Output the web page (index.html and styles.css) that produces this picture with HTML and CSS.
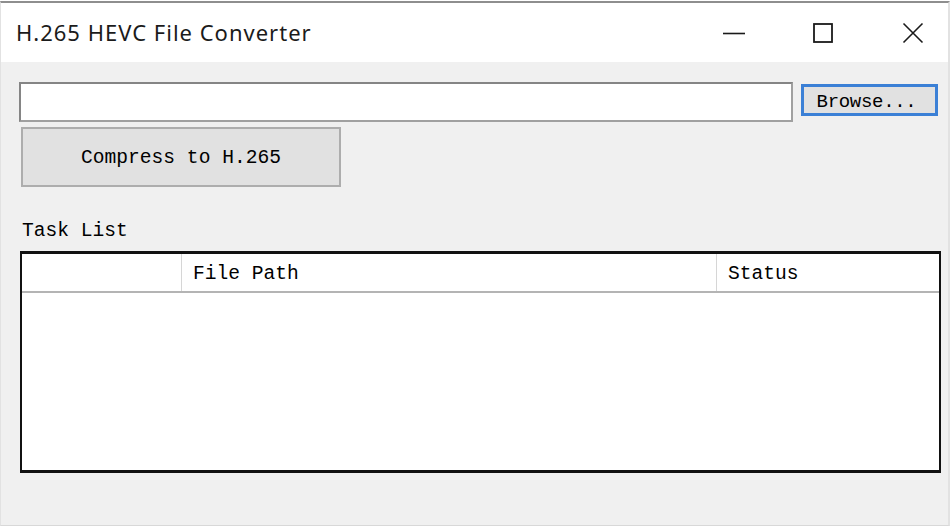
FILE: index.html
```html
<!DOCTYPE html>
<html>
<head>
<meta charset="utf-8">
<title>H.265 HEVC File Converter</title>
<link rel="stylesheet" href="styles.css">
</head>
<body>
<div class="window">
  <div class="titlebar">
    <div class="title">H.265 HEVC File Converter</div>
    <div class="controls">
      <div class="ctrl">
        <svg width="24" height="24" viewBox="0 0 24 24"><path d="M1 12.5H23" stroke="#1a1a1a" stroke-width="1.6" fill="none"/></svg>
      </div>
      <div class="ctrl">
        <svg width="24" height="24" viewBox="0 0 24 24"><rect x="3" y="3" width="18" height="18" stroke="#1a1a1a" stroke-width="1.8" fill="none"/></svg>
      </div>
      <div class="ctrl">
        <svg width="24" height="24" viewBox="0 0 24 24"><path d="M2.5 2.5L21.5 21.5M21.5 2.5L2.5 21.5" stroke="#1a1a1a" stroke-width="1.6" fill="none"/></svg>
      </div>
    </div>
  </div>
  <div class="content">
    <div class="row">
      <div class="path-input"></div>
      <div class="btn browse">Browse...</div>
    </div>
    <div class="btn compress">Compress to H.265</div>
    <div class="label">Task List</div>
    <div class="table">
      <div class="thead">
        <div class="th c1"></div>
        <div class="th c2">File Path</div>
        <div class="th c3">Status</div>
      </div>
      <div class="tbody"></div>
    </div>
  </div>
</div>
</body>
</html>
```

FILE: styles.css
```css
html, body {
  margin: 0;
  padding: 0;
  background: #ffffff;
}
body {
  width: 950px;
  height: 527px;
  overflow: hidden;
}
.window {
  margin-top: 1px;
  height: 525px;
  border-top: 2px solid #8e8e8e;
  border-left: 1px solid #e2e2e2;
  border-right: 2px solid #e2e2e2;
  border-bottom: 1px solid #d8d8d8;
  box-sizing: border-box;
  background: #f0f0f0;
  display: flex;
  flex-direction: column;
}
.titlebar {
  height: 59px;
  background: #ffffff;
  display: flex;
  align-items: center;
  justify-content: space-between;
  flex-shrink: 0;
}
.title {
  font-family: "Noto Sans", "Open Sans", sans-serif;
  font-size: 22px;
  color: #1b1b1b;
  padding-left: 15px;
  margin-top: -1px;
  letter-spacing: 1px;
}
.controls {
  display: flex;
  align-items: center;
  margin-right: 12px;
}
.ctrl {
  width: 46px;
  margin-left: 43px;
  display: flex;
  justify-content: center;
  align-items: center;
  height: 40px;
}
.ctrl:last-child { margin-left: 44px; }
.ctrl svg { display: block; }
.content {
  padding: 20px 10px 0 18px;
  font-family: "Liberation Mono", "DejaVu Sans Mono", monospace;
  font-size: 19.6px;
  color: #000;
}
.row {
  display: flex;
  align-items: flex-start;
}
.path-input {
  width: 774px;
  height: 40px;
  box-sizing: border-box;
  border: 2px solid #858585;
  border-right-color: #a0a0a0;
  border-bottom-color: #a0a0a0;
  background: #ffffff;
}
.btn {
  box-sizing: border-box;
  background: #e1e1e1;
  display: flex;
  align-items: center;
  justify-content: center;
}
.browse {
  margin-left: 8px;
  margin-top: 2px;
  width: 137px;
  height: 32px;
  border: 3px solid #3b80d6;
  font-size: 19px;
  padding-top: 4px;
  padding-right: 6px;
  letter-spacing: -0.3px;
}
.compress {
  margin-top: 5px;
  margin-left: 2px;
  width: 320px;
  height: 60px;
  border: 2px solid #adadad;
  padding-top: 1px;
}
.label {
  margin-top: 32px;
  margin-left: 3px;
  height: 24px;
  line-height: 24px;
}
.table {
  margin-top: 8px;
  margin-left: 1px;
  width: 921px;
  height: 222px;
  box-sizing: border-box;
  border: 2px solid #111111;
  border-top-width: 3px;
  border-right-width: 2px;
  border-bottom-width: 3px;
  background: #ffffff;
  display: flex;
  flex-direction: column;
}
.thead {
  display: flex;
  height: 37px;
  border-bottom: 2px solid #b4b4b4;
  flex-shrink: 0;
}
.th {
  box-sizing: border-box;
  display: flex;
  align-items: center;
  padding-left: 11px;
  padding-top: 2px;
  border-right: 1px solid #d6d6d6;
}
.c1 { width: 160px; }
.c2 { width: 535px; }
.c3 { flex: 1; border-right: none; }
.tbody { flex: 1; }
```
